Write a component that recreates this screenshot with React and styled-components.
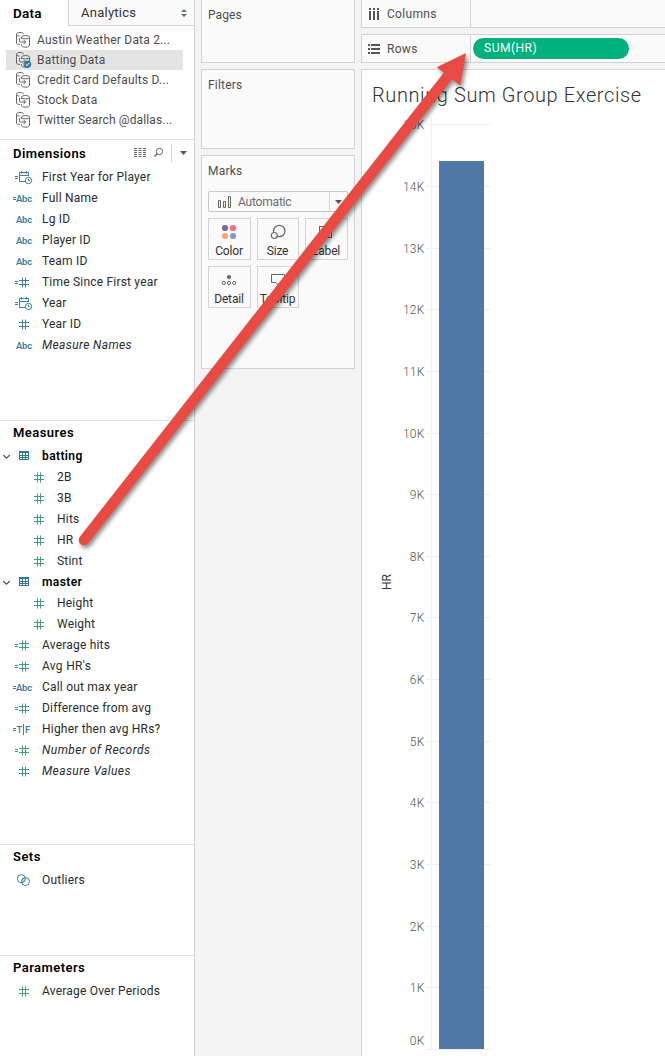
import React from "react";
import styled, { createGlobalStyle, css } from "styled-components";

const BLUE = "#3c7d99";
const GREEN = "#3f9f7c";
const LINE = "#d3d3d3";

const GlobalStyle = createGlobalStyle`
  * { box-sizing: border-box; }
  html, body { margin: 0; background: #f4f4f4; overflow: hidden; }
  body { font-family: Roboto, "Open Sans", "Liberation Sans", sans-serif; font-size: 12px; color: #2b2b2b; }
`;

const Workspace = styled.div`
  position: relative;
  display: flex;
  width: 665px;
  height: 1056px;
  overflow: hidden;
  background: #f4f4f4;
`;

const Sidebar = styled.aside`
  display: flex;
  flex-direction: column;
  flex: none;
  width: 195px;
  background: #fff;
  border-right: 1px solid #d0d0d0;
`;

const Tabs = styled.div`
  display: flex;
  flex: none;
  height: 26px;
`;

const Tab = styled.div`
  display: flex;
  align-items: center;
  justify-content: space-between;
  line-height: 24px;
  letter-spacing: ${(p) => p.$spacing || 0}px;
  ${(p) =>
    p.$active
      ? css`
          width: 68px;
          padding: 0 0 1px 13px;
          font-size: 13.5px;
          font-weight: 600;
          color: #000;
        `
      : css`
          flex: 1;
          padding: 0 7px 0 12px;
          font-size: 13px;
          color: #333;
          background: #fafafa;
          border-left: 1px solid ${LINE};
          border-bottom: 1px solid ${LINE};
        `}
`;

const Sources = styled.div`
  flex: none;
  height: 113px;
  padding: 4px 11px 0 6px;
`;

const Source = styled.div`
  display: flex;
  align-items: center;
  height: 20px;
  padding-left: 9px;
  gap: 6px;
  color: #4d4d4d;
  white-space: nowrap;
  letter-spacing: ${(p) => p.$spacing}px;
  background: ${(p) => (p.$selected ? "#e4e4e4" : "transparent")};
`;

const Section = styled.section`
  flex: none;
  height: ${(p) => p.$height}px;
  border-top: 1px solid #e2e2e2;
`;

const SectionHead = styled.header`
  display: flex;
  align-items: center;
  justify-content: space-between;
  height: ${(p) => p.$height || 24}px;
  padding: 0 7px ${(p) => p.$lift ?? 2}px 13px;
  font-size: 13px;
  font-weight: 600;
  letter-spacing: 0.45px;
  color: #000;
`;

const HeadTools = styled.div`
  display: flex;
  align-items: center;
`;

const Field = styled.div`
  display: flex;
  align-items: center;
  height: 21px;
  padding-left: ${(p) => (p.$nested ? 27 : 12)}px;
  white-space: nowrap;
`;

const FolderRow = styled(Field)`
  padding-left: 2px;
  color: #000;
`;

const IconSlot = styled.span`
  display: flex;
  flex: none;
  width: ${(p) => p.$width || 30}px;
`;

const FieldName = styled.span`
  letter-spacing: ${(p) => p.$spacing}px;
  font-style: ${(p) => (p.$italic ? "italic" : "normal")};
  font-weight: ${(p) => (p.$bold ? 600 : 400)};
`;

const Shelves = styled.div`
  display: flex;
  flex-direction: column;
  flex: none;
  gap: 6px;
  width: 166px;
  padding: 0 6px;
`;

const Card = styled.div`
  flex: none;
  height: ${(p) => p.$height}px;
  padding: ${(p) => p.$top}px 6px 0;
  background: #fafafa;
  border: 1px solid ${LINE};
  ${(p) => p.$open && "border-top: 0;"}
`;

const CardTitle = styled.div`
  height: 14px;
  line-height: 14px;
  letter-spacing: ${(p) => p.$spacing}px;
  color: #4d4d4d;
`;

const MarkSelect = styled.div`
  display: flex;
  align-items: center;
  height: 21px;
  margin: 13px 0 6px;
  border: 1px solid #c8c8c8;
  border-radius: 2px;
  color: #6a6a6a;
  padding-left: 9px;
  letter-spacing: -0.2px;
`;

const MarkName = styled.span`
  flex: 1;
  padding-left: 6px;
`;

const SelectArrow = styled.span`
  display: flex;
  align-items: center;
  justify-content: center;
  width: 18px;
  height: 19px;
  border-left: 1px solid ${LINE};
`;

const MarkGrid = styled.div`
  display: grid;
  grid-template-columns: 43px 42px 43px;
  gap: 6px;
`;

const MarkButton = styled.div`
  display: flex;
  flex-direction: column;
  align-items: center;
  justify-content: space-between;
  height: 42px;
  padding: 5px 1px 1px 0;
  border: 1px solid ${LINE};
  color: #333;
  line-height: 14px;
  letter-spacing: -0.15px;
`;

const Main = styled.main`
  display: flex;
  flex-direction: column;
  flex: 1;
  gap: 6px;
  min-width: 0;
`;

const Shelf = styled.div`
  display: flex;
  flex: none;
  height: ${(p) => p.$height}px;
  border: 1px solid ${LINE};
  border-right: 0;
  ${(p) => p.$open && "border-top: 0;"}
  background: #fafafa;
`;

const ShelfLabel = styled.div`
  display: flex;
  align-items: center;
  gap: 7px;
  width: 108px;
  padding-left: 6px;
  letter-spacing: 0.3px;
  color: #4d4d4d;
`;

const ShelfDrop = styled.div`
  flex: 1;
  padding: 3px 2px;
  border-left: 1px solid ${LINE};
`;

const Pill = styled.div`
  width: 156px;
  height: 21px;
  padding-left: 11px;
  border-radius: 11px;
  background: #00b180;
  color: #fff;
  line-height: 21px;
  letter-spacing: 0.5px;
`;

const View = styled.div`
  flex: 1;
  background: #fff;
  border: 1px solid ${LINE};
  border-width: 1px 0 0 1px;
`;

const ViewTitle = styled.h1`
  height: 47px;
  margin: 0;
  padding: 12px 0 0 10px;
  font-size: 20px;
  font-weight: 300;
  line-height: 27px;
  letter-spacing: 0.6px;
  color: #333;
`;

const Chart = styled.svg`
  display: block;
`;

const AxisLabel = styled.text`
  font-size: 12px;
  font-weight: 300;
  letter-spacing: 0.2px;
  fill: #555;
`;

const AxisTitle = styled.text`
  font-size: 12px;
  fill: #333;
`;

const Pointer = styled.svg`
  position: absolute;
  left: 0;
  top: 0;
  filter: drop-shadow(2px 3px 2px rgba(0, 0, 0, 0.45));
`;

const DatabaseIcon = ({ checked }) => (
  <svg width="16" height="18" viewBox="0 0 16 18" fill="none" stroke="#666" overflow="visible">
    <path d="M5 13.5c-2 0-3.5-.6-3.5-1.5V3.2C1.5 2.2 3 1.5 5 1.5s3.6.7 3.6 1.7M1.5 3.5c.3 1 1.5 1.5 3 1.5" />
    <ellipse cx="10.5" cy="6.2" rx="4" ry="1.7" />
    <path d="M6.5 6.5v1.5M14.5 6.5v8c0 1-1.7 1.7-4 1.7s-4-.7-4-1.7v-1.3" />
    <path d="M4.5 7v3c0 .7.4 1 1 1h5M8.5 8.8l2.2 2.2-2.2 2.2" />
    {checked && (
      <g stroke="none">
        <circle cx="12.4" cy="13.3" r="3.8" fill="#2f7fa3" />
        <path d="M10.7 13.3l1.3 1.3 2.2-2.6" fill="none" stroke="#fff" />
      </g>
    )}
  </svg>
);

const FieldIcon = ({ kind, calc, color = BLUE }) => (
  <svg width="22" height="16" viewBox="0 0 22 16" fill="none" stroke={color}>
    {calc && kind !== "abc" && kind !== "bool" && <path d="M3 7.5h3M3 9.5h3" />}
    {calc && (kind === "abc" || kind === "bool") && <path d="M1 7.5h3M1 9.5h3" />}
    {kind === "num" && <path d="M7 6.5h10M7 10.5h10M10.5 3.5v10M13.5 3.5v10" />}
    {kind === "abc" && (
      <text x="4" y="12" fontSize="9.5" fontWeight="600" textLength="16.2" fill={color} stroke="none">
        Abc
      </text>
    )}
    {kind === "bool" && (
      <>
        <text x="4.5" y="12" fontSize="9.5" fontWeight="500" fill={color} stroke="none">T</text>
        <path d="M11.5 3v11" />
        <text x="13" y="12" fontSize="9.5" fontWeight="500" fill={color} stroke="none">F</text>
      </>
    )}
    {kind === "date" && (
      <>
        <path d="M13 12.5H7.5v-9h9V7M7.5 6.5h9M9.5 2v2.5M14.5 2v2.5" />
        <circle cx="16.5" cy="11.5" r="3.2" fill="#fff" />
        <path d="M16.500 9.7v2h1.7" />
      </>
    )}
    {kind === "set" && (
      <>
        <path d="M11.500 5.2a4 4 0 0 1 0 5.600 4 4 0 0 1-2-2.800 4 4 0 0 1 2-2.800" fill="#b9d6e2" stroke="none" />
        <circle cx="9.3" cy="6.7" r="4" />
        <circle cx="13.5" cy="9.5" r="4" />
      </>
    )}
  </svg>
);

const FolderIcon = () => (
  <svg width="10" height="9" viewBox="0 0 10 9" fill="none">
    <path d="M0 0h10v9H0z" fill="#327791" />
    <path d="M1 2h2v2H1zM4 2h2v2H4zM7 2h2v2H7zM1 5h2v1H1zM4 5h2v1H4zM7 5h2v1H7zM1 7h2v1H1zM4 7h2v1H4zM7 7h2v1H7z" fill="#fff" />
  </svg>
);

const Chevron = () => (
  <svg width="9" height="8" viewBox="0 0 9 8" fill="none" stroke="#555" strokeWidth="1.2">
    <path d="M1.200 3l3.300 3.200L7.800 3" />
  </svg>
);

const Caret = () => (
  <svg width="7" height="4" viewBox="0 0 7 4">
    <path d="M0 0h7L3.500 4z" fill="#555" />
  </svg>
);

const HeaderTools = () => (
  <HeadTools>
    <svg width="53" height="18" viewBox="0 0 53 18" fill="none" stroke="#666">
      <path d="M0 4.500h12M0 6.500h12M0 8.500h12M0 10.500h12M0 12.500h12" strokeDasharray="3 1.5 3 1.5 3 0" />
      <circle cx="25.5" cy="7.5" r="3.2" />
      <path d="M23.200 9.800L20.500 12.500" strokeWidth="1.5" />
      <path d="M37.500 0v18" stroke={LINE} />
      <path d="M46 7h7l-3.500 4z" fill="#555" stroke="none" />
    </svg>
  </HeadTools>
);

const sources = [
  { name: "Austin Weather Data 2...", spacing: 0.2 },
  { name: "Batting Data", selected: true, spacing: 0.2 },
  { name: "Credit Card Defaults D...", spacing: 0.2 },
  { name: "Stock Data", spacing: 0.25 },
  { name: "Twitter Search @dallas...", spacing: 0.13 },
];

const dimensions = [
  { name: "First Year for Player", kind: "date", calc: true },
  { name: "Full Name", kind: "abc", calc: true },
  { name: "Lg ID", kind: "abc" },
  { name: "Player ID", kind: "abc" },
  { name: "Team ID", kind: "abc" },
  { name: "Time Since First year", kind: "num", calc: true },
  { name: "Year", kind: "date", calc: true },
  { name: "Year ID", kind: "num" },
  { name: "Measure Names", kind: "abc", italic: true, spacing: 0.38 },
];

const measures = [
  { name: "batting", folder: true },
  { name: "2B", kind: "num", nested: true },
  { name: "3B", kind: "num", nested: true },
  { name: "Hits", kind: "num", nested: true },
  { name: "HR", kind: "num", nested: true },
  { name: "Stint", kind: "num", nested: true },
  { name: "master", folder: true },
  { name: "Height", kind: "num", nested: true },
  { name: "Weight", kind: "num", nested: true },
  { name: "Average hits", kind: "num", calc: true },
  { name: "Avg HR's", kind: "num", calc: true, spacing: 0.3 },
  { name: "Call out max year", kind: "abc", calc: true, color: BLUE },
  { name: "Difference from avg", kind: "num", calc: true },
  { name: "Higher then avg HRs?", kind: "bool", calc: true, color: BLUE },
  { name: "Number of Records", kind: "num", calc: true, italic: true, spacing: 0.46 },
  { name: "Measure Values", kind: "num", italic: true, spacing: 0.42 },
];

const FieldRow = ({ field, color }) =>
  field.folder ? (
    <FolderRow>
      <IconSlot $width={17}><Chevron /></IconSlot>
      <IconSlot $width={23}><FolderIcon /></IconSlot>
      <FieldName $bold $spacing={0.4}>{field.name}</FieldName>
    </FolderRow>
  ) : (
    <Field $nested={field.nested}>
      <IconSlot><FieldIcon kind={field.kind} calc={field.calc} color={field.color || color} /></IconSlot>
      <FieldName $italic={field.italic} $spacing={field.spacing ?? 0.2}>{field.name}</FieldName>
    </Field>
  );

const yFor = (k) => Math.round(932 - k * 61.65) - 0.5 + (k === 0 ? 0 : 0.0) + 0;

const BarChart = () => (
  <Chart width="303" height="939" viewBox="0 0 303 939">
    <path d="M69.500 0v932" stroke="#f0f0f0" />
    {Array.from({ length: 16 }, (_, k) => (
      <g key={k}>
        <path d={`M64 ${yFor(k) + 1}h65`} stroke="#f0f0f0" />
        <AxisLabel x="62.5" y={k === 0 ? 928 : yFor(k) + 5.5} textAnchor="end">{k}K</AxisLabel>
      </g>
    ))}
    <rect x="77" y="44" width="45" height="888" fill="#4e79a7" />
    <AxisTitle transform="translate(29 465) rotate(-90)" textAnchor="middle">HR</AxisTitle>
  </Chart>
);

const markIcons = {
  Color: (
    <svg width="16" height="16" viewBox="0 0 16 16">
      <circle cx="4" cy="4" r="3.1" fill="#7d6b98" />
      <circle cx="12" cy="4" r="3.1" fill="#fb6a7c" />
      <circle cx="4" cy="12" r="3.1" fill="#f9a474" />
      <circle cx="12" cy="12" r="3.1" fill="#7b9fcb" />
    </svg>
  ),
  Size: (
    <svg width="16" height="16" viewBox="0 0 16 16" fill="none" stroke="#666" strokeWidth="1.2">
      <circle cx="9.3" cy="7" r="5.7" />
      <circle cx="4.3" cy="11.5" r="3" fill="#fafafa" />
    </svg>
  ),
  Label: (
    <svg width="16" height="16" viewBox="0 0 16 16" fill="none" stroke="#666">
      <rect x="1.5" y="2.5" width="12" height="11" />
      <path d="M5 6h5M7.500 6v5" />
    </svg>
  ),
  Detail: (
    <svg width="16" height="16" viewBox="0 0 16 16" fill="none" stroke="#666">
      <circle cx="8" cy="5" r="2.1" fill="#666" stroke="none" />
      <circle cx="2.8" cy="11" r="1.6" />
      <circle cx="8" cy="11" r="1.6" />
      <circle cx="13.2" cy="11" r="1.6" />
    </svg>
  ),
  Tooltip: (
    <svg width="16" height="16" viewBox="0 0 16 16" fill="none" stroke="#666">
      <path d="M1.500 2.500h13v8H10l-2 3-2-3H1.500z" />
    </svg>
  ),
};

export default function App() {
  return (
    <>
      <GlobalStyle />
      <Workspace>
        <Sidebar>
          <Tabs>
            <Tab $active $spacing={0.25}>Data</Tab>
            <Tab $spacing={0.25}>
              Analytics
              <svg width="6" height="8" viewBox="0 0 6 8"><path d="M0 3h6L3 0zM0 5h6L3 8z" fill="#607080" /></svg>
            </Tab>
          </Tabs>
          <Sources>
            {sources.map((s) => (
              <Source key={s.name} $selected={s.selected} $spacing={s.spacing}>
                <DatabaseIcon checked={s.selected} />
                {s.name}
              </Source>
            ))}
          </Sources>
          <Section $height={281}>
            <SectionHead $height={26} $lift={0}>
              Dimensions
              <HeaderTools />
            </SectionHead>
            {dimensions.map((f) => <FieldRow key={f.name} field={f} color={BLUE} />)}
          </Section>
          <Section $height={424}>
            <SectionHead>Measures</SectionHead>
            {measures.map((f) => <FieldRow key={f.name} field={f} color={GREEN} />)}
          </Section>
          <Section $height={111}>
            <SectionHead>Sets</SectionHead>
            <FieldRow field={{ name: "Outliers", kind: "set" }} color={BLUE} />
          </Section>
          <Section $height={101}>
            <SectionHead>Parameters</SectionHead>
            <FieldRow field={{ name: "Average Over Periods", kind: "num" }} color={GREEN} />
          </Section>
        </Sidebar>

        <Shelves>
          <Card $open $height={63} $top={8}><CardTitle $spacing={0.1}>Pages</CardTitle></Card>
          <Card $height={80} $top={8}><CardTitle $spacing={0.2}>Filters</CardTitle></Card>
          <Card $height={214} $top={8}>
            <CardTitle $spacing={0.2}>Marks</CardTitle>
            <MarkSelect>
              <svg width="14" height="12" viewBox="0 0 14 12" fill="none" stroke="#666">
                <path d="M.5 4.500h2v7h-2zM5.500 5.500h2v6h-2zM10.500.5h2v11h-2z" />
              </svg>
              <MarkName>Automatic</MarkName>
              <SelectArrow><Caret /></SelectArrow>
            </MarkSelect>
            <MarkGrid>
              {Object.keys(markIcons).map((name) => (
                <MarkButton key={name}>
                  {markIcons[name]}
                  {name}
                </MarkButton>
              ))}
            </MarkGrid>
          </Card>
        </Shelves>

        <Main>
          <Shelf $open $height={28}>
            <ShelfLabel>
              <svg width="12" height="12" viewBox="0 0 12 12" fill="#555">
                <path d="M1 0h2v2H1zM5 0h2v2H5zM9 0h2v2H9zM1 3h2v9H1zM5 3h2v9H5zM9 3h2v9H9z" />
              </svg>
              Columns
            </ShelfLabel>
            <ShelfDrop />
          </Shelf>
          <Shelf $height={29}>
            <ShelfLabel>
              <svg width="12" height="12" viewBox="0 0 12 12" fill="#555">
                <path d="M0 1h2v2H0zM0 5h2v2H0zM0 9h2v2H0zM3 1h9v2H3zM3 5h9v2H3zM3 9h9v2H3z" />
              </svg>
              Rows
            </ShelfLabel>
            <ShelfDrop><Pill>SUM(HR)</Pill></ShelfDrop>
          </Shelf>
          <View>
            <ViewTitle>Running Sum Group Exercise</ViewTitle>
            <BarChart />
          </View>
        </Main>

        <Pointer width="665" height="1056" viewBox="0 0 665 1056" fill="#e94b44">
          <path d="M84 540L449 74.500" stroke="#e94b44" strokeWidth="10.5" strokeLinecap="round" />
          <path d="M466 53L436.700 67.300l23.500 18.200z" />
        </Pointer>
      </Workspace>
    </>
  );
}
